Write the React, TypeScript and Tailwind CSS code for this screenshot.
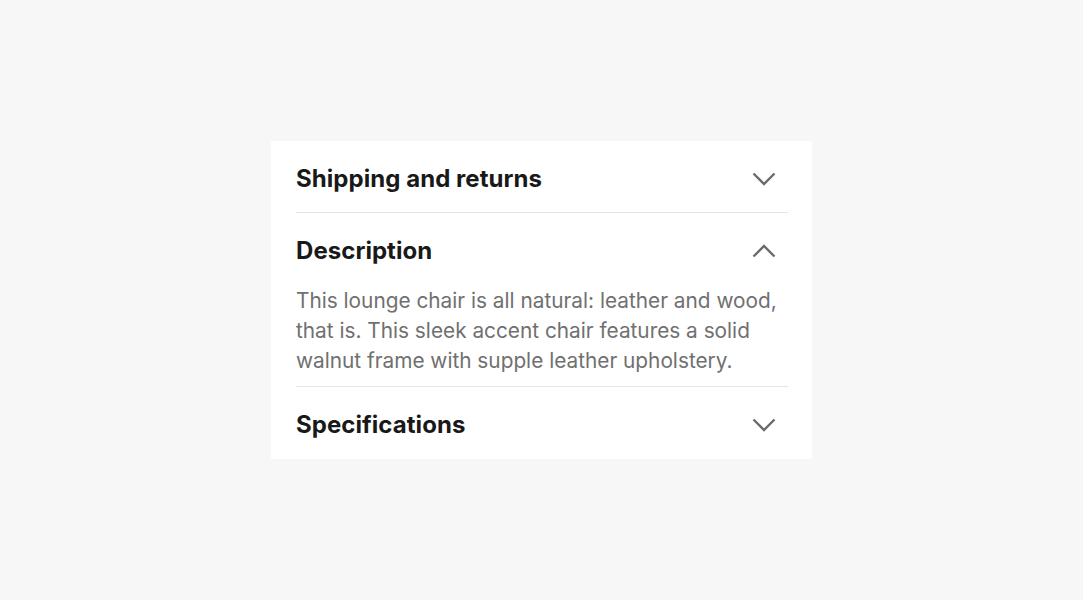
import React from "react";

function Chevron({ up }: { up?: boolean }) {
  return (
    <svg width="24" height="24" viewBox="0 0 24 24" fill="none" className="text-[#6b6b6b]">
      {up ? (
        <path d="M1.5 17.5L12 7L22.5 17.5" stroke="currentColor" strokeWidth="2.4" />
      ) : (
        <path d="M1.5 6.5L12 17L22.5 6.5" stroke="currentColor" strokeWidth="2.4" />
      )}
    </svg>
  );
}

function Header({ title, up, last }: { title: string; up?: boolean; last?: boolean }) {
  return (
    <div className={`flex items-center justify-between pt-[4px] ${last ? "h-[72px]" : "h-[71px]"}`}>
      <span className="text-[24px] font-bold text-[#191919] tracking-[0.05px]">{title}</span>
      <div className="mr-[12px] flex items-center">
        <Chevron up={up} />
      </div>
    </div>
  );
}

export default function App() {
  return (
    <div
      className="flex h-[600px] w-full items-start justify-center bg-[#f7f7f7] pt-[141px]"
      style={{ fontFamily: "Inter, 'Liberation Sans', sans-serif" }}
    >
      <div className="w-[541px] bg-white pl-[25px] pr-[24px]">
        <div className="border-b border-[#e5e5e5]">
          <Header title="Shipping and returns" />
        </div>
        <div className="border-b border-[#e5e5e5]">
          <Header title="Description" up />
          <p className="pt-[2px] pb-[10px] text-[20.8px] leading-[30px] text-[#707070]">
            This lounge chair is all natural: leather and wood, that is. This sleek accent chair features a solid walnut frame with supple leather upholstery.
          </p>
        </div>
        <div>
          <Header title="Specifications" last />
        </div>
      </div>
    </div>
  );
}
